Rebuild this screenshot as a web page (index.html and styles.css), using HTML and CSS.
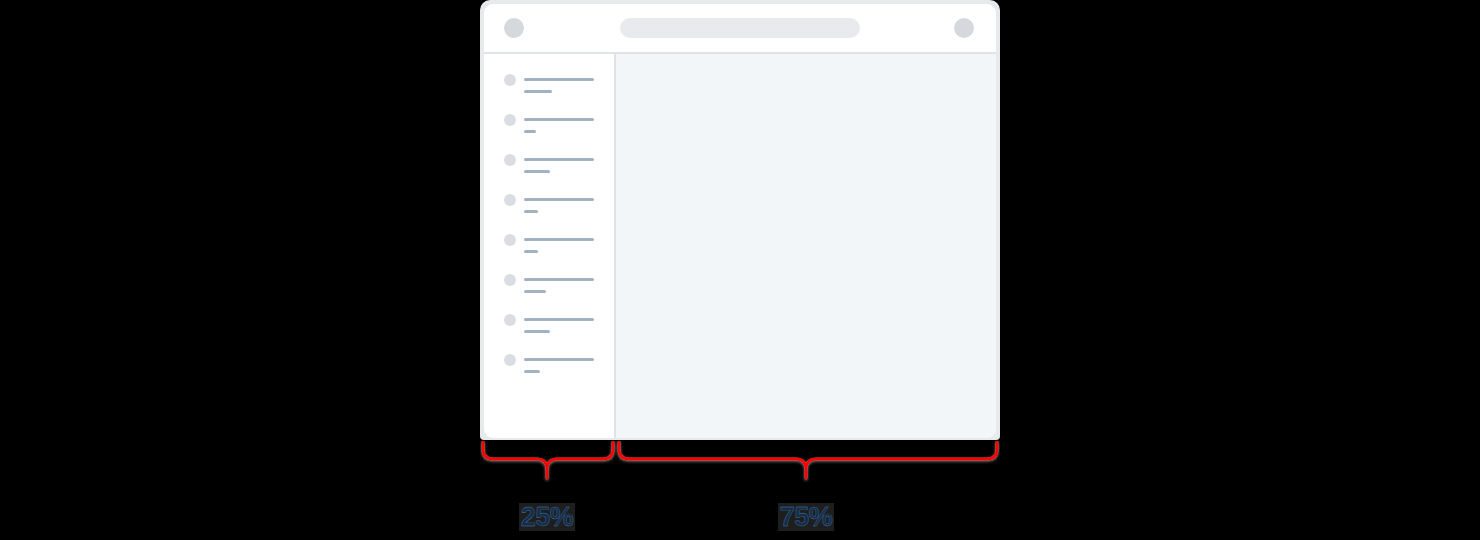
FILE: index.html
```html
<!DOCTYPE html>
<html lang="en">
<head>
<meta charset="utf-8">
<title>Layout 25 / 75</title>
<link rel="stylesheet" href="styles.css">
</head>
<body>
<div class="diagram">
  <div class="frame">
    <div class="window">
      <header class="topbar">
        <span class="dot dot-lg"></span>
        <span class="search"></span>
        <span class="dot dot-lg"></span>
      </header>
      <div class="body">
        <aside class="sidebar">
          <div class="item"><span class="dot dot-sm"></span><div class="lines"><span class="line long"></span><span class="line short" style="width:28px"></span></div></div>
          <div class="item"><span class="dot dot-sm"></span><div class="lines"><span class="line long"></span><span class="line short" style="width:12px"></span></div></div>
          <div class="item"><span class="dot dot-sm"></span><div class="lines"><span class="line long"></span><span class="line short" style="width:26px"></span></div></div>
          <div class="item"><span class="dot dot-sm"></span><div class="lines"><span class="line long"></span><span class="line short" style="width:14px"></span></div></div>
          <div class="item"><span class="dot dot-sm"></span><div class="lines"><span class="line long"></span><span class="line short" style="width:14px"></span></div></div>
          <div class="item"><span class="dot dot-sm"></span><div class="lines"><span class="line long"></span><span class="line short" style="width:22px"></span></div></div>
          <div class="item"><span class="dot dot-sm"></span><div class="lines"><span class="line long"></span><span class="line short" style="width:26px"></span></div></div>
          <div class="item"><span class="dot dot-sm"></span><div class="lines"><span class="line long"></span><span class="line short" style="width:16px"></span></div></div>
        </aside>
        <main class="content"></main>
      </div>
    </div>
  </div>
  <svg class="braces" width="520" height="44" viewBox="0 0 520 44" aria-hidden="true">
    <defs>
      <filter id="sh" x="-5%" y="-30%" width="110%" height="160%">
        <feDropShadow dx="0" dy="1" stdDeviation="1.5" flood-color="#8a8a8a" flood-opacity="0.9"/>
      </filter>
    </defs>
    <g fill="none" stroke="#ff0000" stroke-width="3" stroke-linecap="round" stroke-linejoin="round" filter="url(#sh)">
      <path d="M3 1 V8 Q3 18 13 18 H57 Q66 18 67 27 Q68 18 77 18 H123 Q133 18 133 8 V1"/>
      <path d="M67 27 V37"/>
      <path d="M139 1 V8 Q139 18 149 18 H316 Q325 18 326 27 Q327 18 336 18 H507 Q517 18 517 8 V1"/>
      <path d="M326 27 V37"/>
    </g>
  </svg>
  <div class="labels">
    <div class="label label-left"><span class="pct">25%</span></div>
    <div class="label label-right"><span class="pct">75%</span></div>
  </div>
</div>
</body>
</html>
```

FILE: styles.css
```css
* { box-sizing: border-box; }
html, body { margin: 0; padding: 0; }
body {
  background: #000;
  width: 1480px;
  height: 540px;
  overflow: hidden;
  font-family: "Liberation Sans", Arial, sans-serif;
}
.diagram {
  width: 520px;
  margin: 0 auto;
  display: flex;
  flex-direction: column;
}
.frame {
  height: 440px;
  background: #e8e9ea;
  border-radius: 10px 10px 4px 4px;
  padding: 4px 4px 2px 4px;
}
.window {
  height: 100%;
  background: #fff;
  border-radius: 9px;
  overflow: hidden;
  display: flex;
  flex-direction: column;
}
.topbar {
  height: 50px;
  flex: none;
  border-bottom: 2px solid #e1e4e7;
  display: flex;
  align-items: center;
  justify-content: space-between;
  padding: 0 22px 0 20px;
}
.dot { display: block; border-radius: 50%; background: #d5d9de; flex: none; }
.dot-lg { width: 20px; height: 20px; }
.dot-sm { width: 12px; height: 12px; background: #dadde1; }
.search {
  width: 240px;
  height: 20px;
  border-radius: 10px;
  background: #e8eaed;
  margin-left: 76px;
  margin-right: 74px;
}
.body {
  flex: 1;
  display: flex;
}
.sidebar {
  width: 132px;
  flex: none;
  border-right: 2px solid #dfe3e6;
  padding: 20px 0 0 20px;
  display: flex;
  flex-direction: column;
  gap: 28px;
}
.item {
  display: flex;
  align-items: flex-start;
  gap: 8px;
  height: 12px;
}
.lines {
  display: flex;
  flex-direction: column;
  gap: 9px;
  padding-top: 4px;
}
.line {
  display: block;
  height: 3px;
  border-radius: 2px;
  background: #a2b2c5;
}
.line.long { width: 70px; }
.content {
  flex: 1;
  background: #f2f6f9;
}
.braces {
  display: block;
  margin-top: 1px;
}
.labels {
  display: flex;
  margin-top: 18px;
}
.label {
  display: flex;
  justify-content: center;
}
.label-left { width: 134px; }
.label-right { width: 382px; padding-left: 2px; }
.pct {
  font-size: 27px;
  font-weight: bold;
  letter-spacing: -0.5px;
  line-height: 28px;
  color: #172b47;
  -webkit-text-stroke: 0.4px #3f7fb0;
  background: #1e1e1e;
  padding: 0 2px;
}
```
